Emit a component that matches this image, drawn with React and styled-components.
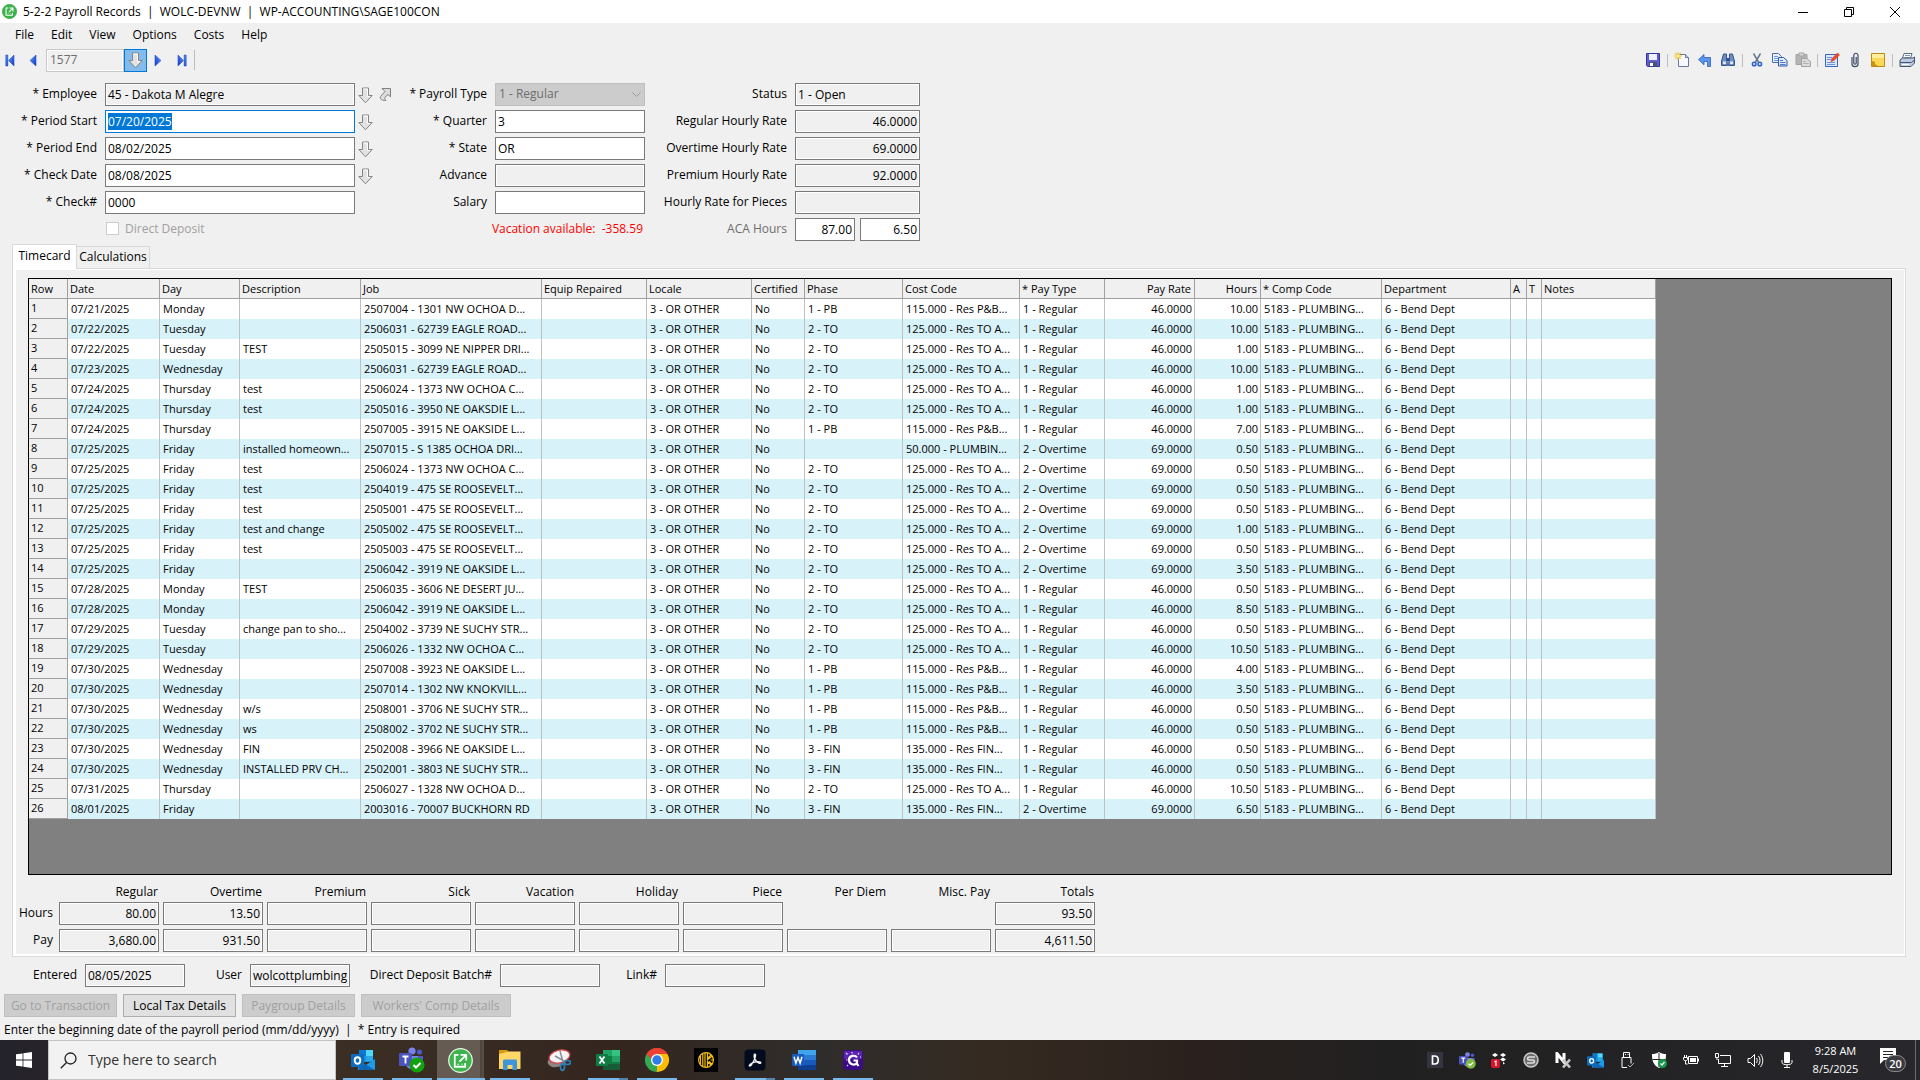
import React, { useEffect, useRef, useState } from "react";
import styled, { createGlobalStyle } from "styled-components";

const GlobalStyle = createGlobalStyle`
  * { box-sizing: border-box; }
  body {
    margin: 0;
    background: #f0f0f0;
    color: #000;
    font-family: "Open Sans", "Noto Sans", sans-serif;
    font-size: 12px;
    line-height: 16px;
  }
  button, input, select { font: inherit; color: inherit; }
  ::selection { background: #0078d7; color: #fff; }
`;

const Screen = styled.div`
  min-height: 100vh;
  display: flex;
  flex-direction: column;
`;

// Title bar
const TitleBar = styled.header`
  display: flex;
  align-items: center;
  height: 23px;
  padding: 0 2px;
  background: #fff;
`;

const Title = styled.h1`
  flex: 1;
  margin: 0 0 0 6px;
  font-size: 12px;
  font-weight: 400;
  white-space: pre;
`;

const WindowButton = styled.button`
  width: 46px;
  height: 21px;
  padding: 0;
  border: none;
  background: none;
  display: flex;
  align-items: center;
  justify-content: center;
`;

// Menu and toolbar
const MenuBar = styled.nav`
  display: flex;
  gap: 17px;
  height: 24px;
  padding: 0 15px;
  align-items: center;
`;

const MenuItem = styled.button`
  padding: 0;
  border: none;
  background: none;
`;

const Toolbar = styled.div`
  display: flex;
  align-items: center;
  height: 26px;
  padding-right: 2px;
`;

const ToolButton = styled.button`
  width: ${(p) => p.$w || 23}px;
  height: 23px;
  padding: 0;
  border: 1px solid ${(p) => (p.$active ? "#0078d7" : "transparent")};
  background: ${(p) => (p.$active ? "#83bbec" : "none")};
  display: flex;
  align-items: center;
  justify-content: center;
`;

const RecordInput = styled.input`
  width: 78px;
  height: 23px;
  margin-left: 1px;
  padding: 0 3px 2px;
  border: 1px solid #c8c8c8;
  background: #f0f0f0;
  box-shadow: inset 0 0 0 1px #fff;
  color: #6d6d6d;
`;

const ToolSeparator = styled.span`
  width: 1px;
  height: ${(p) => (p.$tall ? 20 : 13)}px;
  margin: 0 2px 0 ${(p) => (p.$tall ? 0 : 3)}px;
  background: #bdbdbd;
`;

const Spacer = styled.div`
  flex: 1;
`;

// Header form
const Form = styled.form`
  display: flex;
  align-items: flex-start;
  padding-top: 10px;
`;

const FieldColumn = styled.div`
  display: flex;
  flex-direction: column;
  gap: 4px;
`;

const FieldRow = styled.div`
  display: flex;
  align-items: center;
  height: 23px;
`;

const Label = styled.label`
  width: ${(p) => p.$w}px;
  margin-right: 8px;
  padding-bottom: 1px;
  text-align: right;
  white-space: nowrap;
  color: ${(p) => (p.$dim ? "#6d6d6d" : "#000")};
`;

const TextInput = styled.input`
  width: ${(p) => p.$w || 100}px;
  height: 23px;
  padding: 0 2px 1px;
  border: 1px solid #7a7a7a;
  border-radius: 0;
  background: ${(p) => (p.readOnly ? "#f0f0f0" : "#fff")};
  box-shadow: inset 0 0 0 1px #fff;
  text-align: ${(p) => (p.$right ? "right" : "left")};

  &:focus {
    outline: none;
    border-color: #0078d7;
  }
`;

const IconSlot = styled.div`
  display: flex;
  gap: 6px;
  width: 40px;
  padding: 1px 0 0 3px;
`;

const IconButton = styled.button`
  display: flex;
  padding: 0;
  border: none;
  background: none;
`;

const SelectBox = styled.div`
  display: grid;
  align-items: center;
  width: 150px;
  height: 23px;
`;

const Select = styled.select`
  grid-area: 1 / 1;
  width: 100%;
  height: 23px;
  padding: 0 3px 1px;
  border: 1px solid #bfbfbf;
  border-radius: 0;
  background: #ccc;
  color: #6d6d6d;
  opacity: 1;
  appearance: none;
`;

const SelectArrow = styled.svg`
  grid-area: 1 / 1;
  justify-self: end;
  margin-right: 4px;
  pointer-events: none;
`;

const CheckRow = styled.label`
  display: flex;
  align-items: center;
  gap: 6px;
  height: 21px;
  margin: 0 0 2px 106px;
  color: #a0a0a0;
`;

const CheckBox = styled.input`
  appearance: none;
  width: 13px;
  height: 13px;
  margin: 0;
  border: 1px solid #ccc;
  background: #fff;
`;

const Vacation = styled.div`
  height: 23px;
  padding: 3px 2px 0 0;
  text-align: right;
  white-space: pre;
  color: #f00;
`;

const AcaInputs = styled.div`
  display: flex;
  gap: 5px;
`;

// Tabs and grid
const TabList = styled.div`
  display: flex;
  align-items: flex-end;
  height: 27px;
  margin: 0 12px;
`;

const Tab = styled.button`
  position: relative;
  top: ${(p) => (p.$on ? 1 : 0)}px;
  width: ${(p) => (p.$on ? 65 : 73)}px;
  height: ${(p) => (p.$on ? 25 : 22)}px;
  padding: 0 0 2px;
  border: 1px solid #d9d9d9;
  border-bottom: none;
  border-left-width: ${(p) => (p.$on ? 1 : 0)}px;
  background: ${(p) => (p.$on ? "#fff" : "#f0f0f0")};
`;

const TabPanel = styled.section`
  flex: 1;
  display: flex;
  flex-direction: column;
  margin: 0 14px 0 12px;
  padding: 7px 11px 2px 13px;
  border: 1px solid #d9d9d9;
  box-shadow: inset 3px 0 0 #fff, inset 0 1px 0 #fff, inset 0 -2px 0 #fff, inset -1px 0 0 #fff;
`;

const GridFrame = styled.div`
  flex: 1;
  margin: 2px 2px 0 2px;
  border: 1px solid #000;
  background: #808080;
  overflow: auto;
`;

const Table = styled.table`
  width: 1627px;
  table-layout: fixed;
  border-collapse: separate;
  border-spacing: 0;
  font-size: 11px;
`;

const Col = styled.col`
  width: ${(p) => p.$w}px;
`;

const Th = styled.th`
  height: 20px;
  padding: 0 3px 0 2px;
  border-right: 1px solid #a0a0a0;
  border-bottom: 1px solid #a0a0a0;
  background: #f0f0f0;
  font-weight: 400;
  text-align: ${(p) => (p.$right ? "right" : "left")};
  white-space: nowrap;
  overflow: hidden;
`;

const RowHead = styled(Th)`
  padding-bottom: 1px;
`;

const Tr = styled.tr`
  background: #fff;

  &:nth-child(even) {
    background: #d8f2f9;
  }
`;

const Td = styled.td`
  height: 20px;
  padding: 0 2px 0 3px;
  border-right: 1px solid #c0c0c0;
  text-align: ${(p) => (p.$right ? "right" : "left")};
  white-space: nowrap;
  overflow: hidden;
`;

// Totals and footer
const Totals = styled.div`
  display: grid;
  grid-template-columns: 29px repeat(10, 100px);
  gap: 4px;
  align-items: center;
  padding: 9px 0 2px 0;
`;

const TotalHead = styled.span`
  height: 14px;
  text-align: right;
  line-height: 16px;
  padding-right: 1px;
`;

const TotalLabel = styled.span`
  text-align: right;
  padding: 0 2px 2px 0;
  justify-self: end;
`;

const Footer = styled.div`
  display: flex;
  padding-top: 7px;
`;

const ButtonRow = styled.div`
  display: flex;
  gap: 6px;
  padding: 7px 4px 0;
`;

const ActionButton = styled.button`
  width: ${(p) => p.$w || 113}px;
  height: 23px;
  padding: 0;
  border: 1px solid #adadad;
  background: #e1e1e1;
  white-space: nowrap;

  &:disabled {
    border-color: #bfbfbf;
    background: #ccc;
    color: #a0a0a0;
  }
`;

const StatusLine = styled.div`
  height: 23px;
  padding: 5px 4px 0;
  white-space: pre;
`;

// Taskbar
const Taskbar = styled.footer`
  display: flex;
  height: 40px;
  color: #fff;
  background: linear-gradient(90deg, #24222b 0, #3b2f25 336px, #34261f 620px, #2f2d2b 820px, #352a21 1000px, #2a211e 1200px, #202020 1400px, #27272c 100%);
`;

const StartButton = styled.button`
  width: 48px;
  padding: 0;
  border: none;
  background: none;
  display: flex;
  align-items: center;
  justify-content: center;
`;

const SearchBox = styled.label`
  display: flex;
  align-items: center;
  gap: 11px;
  width: 288px;
  padding-left: 11px;
  border: 1px solid #c4c4c4;
  background: #f2f2f2;
  margin-right: 2px;
`;

const SearchInput = styled.input`
  flex: 1;
  min-width: 0;
  padding: 0;
  border: none;
  background: none;
  font-size: 14px;
  outline: none;

  &::placeholder {
    color: #333;
    opacity: 1;
  }
`;

const TaskButton = styled.button`
  width: 49px;
  height: 40px;
  padding: 0;
  border: none;
  background: ${(p) => (p.$active ? "linear-gradient(90deg, transparent 1px, #655b52 1px, #655b52 44px, #4d443c 44px, #5a5048 48px, transparent 48px)" : "none")};
  display: grid;
  place-items: center;
`;

const TaskIcon = styled.span`
  grid-area: 1 / 1;
  display: flex;
`;

const RunningMark = styled.span`
  grid-area: 1 / 1;
  align-self: end;
  width: ${(p) => (p.$wide ? 48 : 40)}px;
  height: 2px;
  background: ${(p) => (p.$stack ? "linear-gradient(90deg, #76b9ed 31px, #5682a5 31px)" : "#76b9ed")};
`;

const Tray = styled.div`
  display: flex;
  align-items: center;
`;

const TrayButton = styled.button`
  width: ${(p) => p.$w || 32}px;
  height: 40px;
  padding: 0;
  border: none;
  background: none;
  display: flex;
  align-items: center;
  justify-content: center;
`;

const Clock = styled.time`
  width: 65px;
  text-align: center;
  font-size: 11px;
  line-height: 18px;
`;

const ShowDesktop = styled.button`
  width: 5px;
  height: 40px;
  padding: 0;
  border: none;
  border-left: 1px solid #6c6c70;
  background: none;
`;

/* ---- icons ---- */
const Svg = ({ s = 16, w, h, vb, children }) => (
  <svg width={w || s} height={h || s} viewBox={vb || `0 0 ${w || s} ${h || s}`} fill="none" aria-hidden="true">
    {children}
  </svg>
);

const SageIcon = ({ s = 14, ring }) => (
  <Svg s={s} vb="0 0 24 24">
    <circle cx="12" cy="12" r="11.3" fill="#3cb44a" stroke={ring ? "#e8f6e8" : "#2f9e3d"} strokeWidth="1.2" />
    <path d="M6.500 8v10h10v-3.500M6.500 8v-1.500h3.500M11 13l6-6M12 6.500h5.500V12" stroke="#fff" strokeWidth="1.700" />
    <path d="M9.500 15v.500h1M13 15.500h1" stroke="#fff" />
  </Svg>
);

const NavIcon = ({ dir, bar }) => (
  <Svg w={10} h={13}>
    <defs>
      <linearGradient id={`nav${dir}${bar ? "b" : ""}`} x1="0" y1="0" x2="1" y2="1">
        <stop offset="0" stopColor="#6aa0f5" />
        <stop offset="1" stopColor="#0a33c0" />
      </linearGradient>
    </defs>
    <g fill={`url(#nav${dir}${bar ? "b" : ""})`} stroke="#1f55cf" strokeWidth=".6" transform={dir === "left" ? undefined : "matrix(-1 0 0 1 10 0)"}>
      <path d={bar ? "M9 1v11L3.500 6.500z" : "M8 1v11L2 6.500z"} />
      {bar && <path d="M.8 1h2v11h-2z" />}
    </g>
  </Svg>
);

const DownArrow = () => (
  <Svg w={15} h={17}>
    <path d="M4.500 1h6v7.500h3.700L7.500 15.800.8 8.500h3.700z" fill="#e2e2e2" stroke="#858585" />
    <path d="M5.500 2h4v7.500h2.500" stroke="#fff" />
  </Svg>
);

const JumpArrow = () => (
  <Svg w={13} h={15}>
    <path d="M3 1.500h8.500v8.300L9 7.500 6 10.300c-1 1 0 2 1 3.200C3 13.800.5 12 1.500 9.500L6 4.500z" fill="#dcdcdc" stroke="#808080" />
  </Svg>
);

const SaveIcon = () => (
  <Svg s={16}>
    <path d="M1.500 1.500h13v13h-12l-1-1z" fill="#5d5fd0" stroke="#34359c" />
    <path d="M4 2h8v6H4z" fill="#eef2ff" />
    <path d="M4 10h8v4.500H4z" fill="#4a5080" />
    <path d="M5 11h3v3H5z" fill="#fff" />
  </Svg>
);

const NewIcon = () => (
  <Svg s={16}>
    <path d="M4.500 2.500h7l3 3v9h-10z" fill="#f6f9ff" stroke="#66799c" />
    <path d="M11.500 2.500v3h3" fill="#c9d6ea" stroke="#66799c" />
    <path d="M4 0v8M0 4h8M1.200 1.200l5.600 5.600M6.800 1.200L1.200 6.800" stroke="#f0bd2b" strokeWidth="1.100" />
    <circle cx="4" cy="4" r="1.600" fill="#fff3a8" />
  </Svg>
);

const UndoIcon = () => (
  <Svg s={16}>
    <path d="M7 2.500v3h6.500v9h-3v-5H7v3.300L1.500 7.600z" fill="#5b96ec" stroke="#2a5fc4" strokeWidth=".8" />
  </Svg>
);

const FindIcon = () => (
  <Svg s={16}>
    <path d="M3.500 2h3v3l1 8.500h-6V9zM9.500 2h3l2 7v4.500h-6L9.500 5z" fill="#6d8cc6" stroke="#2c4a80" strokeWidth=".9" />
    <path d="M6.500 6h3v3h-3z" fill="#2c4a86" />
    <path d="M3 9.500h3v2.500H3zM10 9.500h3v2.500h-3z" fill="#dce8fb" />
  </Svg>
);

const CutIcon = () => (
  <Svg s={16}>
    <path d="M4.500 1.500L9.500 10M11.500 1.500L6.500 10" stroke="#66758f" strokeWidth="1.500" />
    <circle cx="5.200" cy="12" r="1.800" stroke="#2a5fc4" strokeWidth="1.500" />
    <circle cx="10.800" cy="12" r="1.800" stroke="#2a5fc4" strokeWidth="1.500" />
  </Svg>
);

const CopyIcon = () => (
  <Svg s={16}>
    <path d="M.5 1.500h6l3 3v6h-9z" fill="#e9f1ff" stroke="#4a6dae" />
    <path d="M2 4.500h4M2 6.500h5M2 8.500h4" stroke="#6f97dd" />
    <path d="M6.500 5.500h5l3.500 3v5.500H6.500z" fill="#dce9ff" stroke="#3057a5" />
    <path d="M8 8.500h3M8 10.500h5.500M8 12.500h5.500" stroke="#4c7bd0" />
  </Svg>
);

const PasteIcon = () => (
  <Svg s={16}>
    <path d="M1 2.500h11v10H1z" fill="#b4b4b4" stroke="#a2a2a2" />
    <path d="M4 1h5v3H4z" fill="#d8d8d8" stroke="#a2a2a2" />
    <path d="M6.500 6.500h5l4 3v5h-9z" fill="#dcdcdc" stroke="#a0a0a0" />
    <path d="M8 9.500h3M8 11.500h6" stroke="#b0b0b0" />
  </Svg>
);

const EditIcon = () => (
  <Svg s={16}>
    <path d="M1.500 2.500h12v12h-12z" fill="#dbe8fc" stroke="#3a66b8" />
    <path d="M3 5.500h5M3 7.500h4M3 10.500h8M3 12.500h8" stroke="#6d94dc" />
    <path d="M7 9.500l1-3L13.500 1l2 2L10 8.500z" fill="#ef4a2c" stroke="#c33a20" strokeWidth=".6" />
  </Svg>
);

const ClipIcon = () => (
  <Svg s={16}>
    <path d="M5 5v7c0 3.500 6 3.500 6 0V3.500C11 .5 6.800.5 6.800 3.500V11c0 1.600 2.400 1.600 2.400 0V5" stroke="#3b4b66" strokeWidth="1.200" />
  </Svg>
);

const NoteIcon = () => (
  <Svg s={16}>
    <path d="M1.500 1.500h13v13h-13z" fill="#fbd956" stroke="#b98a1a" />
    <path d="M2 2h12v4H2z" fill="#fdee9c" />
    <path d="M2 9l3 1v2l3 2H2z" fill="#c8930d" />
  </Svg>
);

const PrintIcon = () => (
  <Svg s={16}>
    <path d="M5 1.500h8l-2 6H3z" fill="#fff" stroke="#5a6c8c" />
    <path d="M6 3.500h5M5.500 5.500h5" stroke="#7d93bc" />
    <path d="M1 8l2.500-2H14l1.500-1v6L12 14.500H1z" fill="#bccbe3" stroke="#44546f" />
    <path d="M1 10.500h11.500l3-2.500" stroke="#44546f" />
    <path d="M3 12.500h7" stroke="#fff" />
  </Svg>
);

const OutlookIcon = ({ s = 24 }) => (
  <Svg s={s} vb="0 0 24 24">
    <path d="M8 2h14v12H8z" fill="#1490df" />
    <path d="M8 2h7v6H8z" fill="#0f78d4" />
    <path d="M15 2h7v6h-7z" fill="#50d9ff" />
    <path d="M15 8h7v5h-7z" fill="#28a8ea" />
    <path d="M7 12l8 5 9-6v11H7z" fill="#1d9be8" />
    <path d="M7 12l17 10H8z" fill="#1066b5" />
    <rect x="0" y="6" width="13" height="13" rx="1" fill="#0f6cbd" />
    <ellipse cx="6.500" cy="12.500" rx="2.800" ry="3.200" stroke="#fff" strokeWidth="1.900" />
  </Svg>
);

const TeamsIcon = ({ s = 26, check = "#13a10e" }) => (
  <Svg s={s} vb="0 0 26 26">
    <circle cx="13" cy="4" r="3.600" fill="#7b83eb" />
    <circle cx="20.500" cy="5" r="2.600" fill="#5059c9" />
    <path d="M16 9h8v7c0 3-3 5-6 4z" fill="#5059c9" />
    <path d="M7 9h12v8c0 7-10 7-12 1z" fill="#7b83eb" />
    <rect x="0" y="6" width="13" height="13" rx="1" fill="#4b53bc" />
    <path d="M3.500 9.500h6M6.500 9.500v7" stroke="#fff" strokeWidth="1.800" />
    <circle cx="18" cy="18" r="7.600" fill={check} />
    <path d="M14.500 18l2.500 2.500 4.500-4.500" stroke="#fff" strokeWidth="2" />
  </Svg>
);

const FolderIcon = () => (
  <Svg s={24}>
    <path d="M1 2h8l2 2v4H1z" fill="#d99a12" />
    <path d="M1 6l10-2.500h11.500V21H1z" fill="#ffd766" />
    <path d="M5 22v-9c0-1 .5-1.500 1.500-1.500h11c1 0 1.500.5 1.500 1.500v9h-4.500v-5h-5v5z" fill="#3f95dc" />
  </Svg>
);

const SnipIcon = () => (
  <Svg s={24}>
    <ellipse cx="10" cy="13" rx="9.500" ry="6" transform="rotate(-14 10 13)" fill="#8b8583" />
    <ellipse cx="12.500" cy="8.500" rx="10.500" ry="6.300" transform="rotate(-14 12.500 8.500)" fill="#f7f4f4" stroke="#d4474b" strokeWidth="1.300" />
    <path d="M13 3l3 11M8 8l9 5" stroke="#8a8f95" strokeWidth="1.500" />
    <ellipse cx="20.500" cy="14.500" rx="3" ry="2" stroke="#2a7fb8" strokeWidth="1.700" />
    <ellipse cx="15.500" cy="19" rx="2" ry="3.300" stroke="#2a7fb8" strokeWidth="1.700" />
  </Svg>
);

const ExcelIcon = () => (
  <Svg s={24}>
    <path d="M7 2h9v7H7z" fill="#21a366" />
    <path d="M16 2h8v6h-8z" fill="#33c481" />
    <path d="M7 8h9v8H7z" fill="#107c41" />
    <path d="M16 8h8v6h-8z" fill="#21a366" />
    <path d="M16 14h8v4h-8z" fill="#107c41" />
    <path d="M7 16h17v6H7z" fill="#185c37" />
    <rect x="0" y="6" width="12" height="12" rx="1" fill="#107c41" />
    <path d="M3.500 8.500l5 7M8.500 8.500l-5 7" stroke="#fff" strokeWidth="1.800" />
  </Svg>
);

const WordIcon = () => (
  <Svg s={24}>
    <path d="M6 2h18v5H6z" fill="#41a5ee" />
    <path d="M6 7h18v5H6z" fill="#2b7cd3" />
    <path d="M6 12h18v5H6z" fill="#185abd" />
    <path d="M6 17h18v5H6z" fill="#103f91" />
    <rect x="0" y="6" width="12" height="12" rx="1" fill="#185abd" />
    <path d="M2 8.700l1.900 6.500L6 9.500l2.100 5.700L10 8.700" stroke="#fff" strokeWidth="1.500" />
  </Svg>
);

const ChromeIcon = () => (
  <Svg s={24}>
    <path d="M12 12L1.600 6A12 12 0 0 1 22.400 6z" fill="#ea4335" />
    <path d="M12 12L22.400 6A12 12 0 0 1 12 24z" fill="#fbbc05" />
    <path d="M12 12v12A12 12 0 0 1 1.600 6z" fill="#34a853" />
    <path d="M12 6h10.400L17.200 15 12 24l-.5 0L16.500 14z" fill="#fbbc05" />
    <path d="M1.600 6A12 12 0 0 1 22.400 6H12L7 12z" fill="#ea4335" />
    <circle cx="12" cy="12" r="6" fill="#fff" />
    <circle cx="12" cy="12" r="4.700" fill="#2f7de9" />
  </Svg>
);

const KeeperIcon = () => (
  <Svg s={24}>
    <path d="M0 0h24v24H0z" fill="#000" />
    <circle cx="12" cy="12" r="7.400" stroke="#f2bf12" strokeWidth="1.200" />
    <path d="M6.500 8v8M8.800 6v12M11 5v14M13.500 5v5.500L17 7M13.500 19v-5.500L17 17M13 12l2-1.500L18.500 8M15 13.500l3.500 3M16.500 12h3" stroke="#f2bf12" strokeWidth="1.200" />
  </Svg>
);

const AcrobatIcon = () => (
  <Svg s={24}>
    <rect x="1.500" y="1.500" width="21" height="21" rx="4" fill="#020b1d" />
    <path d="M6.300 17.500c1-2 4-3.300 7-3.700 2-.2 4.700-.1 4.500 1-.3 1.200-3 .2-4.300-1.300-1.500-1.700-2.700-4.500-2.300-6.700.2-1 1.400-.8 1.400.3 0 2.500-2 6.500-4 9.500-.8 1.300-2.600 2-2.300.9z" stroke="#f4f4f4" strokeWidth="1.300" />
  </Svg>
);

const PurpleIcon = () => (
  <Svg s={24}>
    <rect x="2" y="2" width="20" height="20" rx="4" fill="#3a0d86" />
    <path d="M3 3h18v8H3z" fill="#5b23ad" />
    <path d="M16 9.500C14 6.500 8 7.500 8 12s5.500 6 8 3v-2.500h-3.500M15.500 15l2 3" stroke="#fff" strokeWidth="2.200" />
    <path d="M5 5l1.500 1.500M5 12h1.500M6 18l1-1M18 5l-1 1.500M11 4v1.500M19 9h1" stroke="#e6d5ff" strokeWidth="1.200" />
  </Svg>
);

const WindowsLogo = () => (
  <Svg s={16}>
    <path d="M0 2.300L6.600 1.400v6.200H0zM7.400 1.300L16 0v7.600H7.400zM0 8.400h6.600v6.200L0 13.700zM7.400 8.400H16V16l-8.600-1.300z" fill="#fff" />
  </Svg>
);

const SearchIcon = () => (
  <Svg s={17}>
    <circle cx="10.500" cy="6.500" r="5.500" stroke="#222" strokeWidth="1.300" />
    <path d="M6.500 10.500L.8 16.200" stroke="#222" strokeWidth="1.300" />
  </Svg>
);

const TrayD = () => (
  <Svg s={16}>
    <path d="M0 0h16v16H0z" fill="#33343f" />
    <path d="M5.500 4h2c5 0 5 8 0 8h-2z" stroke="#fff" strokeWidth="1.700" />
  </Svg>
);

const TrayDropbox = () => (
  <Svg s={16}>
    <path d="M4 1l3 2-3 2-3-2zM12 1l3 2-3 2-3-2zM12 5.500l3 2-3 2-3-2zM12 10l2 1.200-2 1.300z" fill="#fff" />
    <rect x="0" y="7" width="9" height="9" rx="2" fill="#d8142c" />
    <path d="M3.500 10l1.500-1v5" stroke="#fff" strokeWidth="1.200" />
  </Svg>
);

const TrayS = () => (
  <Svg s={16}>
    <circle cx="8" cy="8" r="7" fill="#6e6e6e" stroke="#c9c9c9" strokeWidth="1.500" />
    <path d="M12 5H6.500C4 5 4 8 6.500 8h3c2.500 0 2.500 3 0 3H4" stroke="#e0e0e0" strokeWidth="1.500" />
  </Svg>
);

const TrayNx = () => (
  <Svg s={16}>
    <path d="M2 11V1.500L9 10V1" stroke="#fff" strokeWidth="3" />
    <path d="M8 7.500l7 8M15 7.500l-7 8" stroke="#c4c4c4" strokeWidth="2.600" />
  </Svg>
);

const TrayUsb = () => (
  <Svg s={16}>
    <path d="M4.500 5V.500h6V5M3 5.500h9v6M3 5.500v10h5M6 2.500h1M8.500 2.500h1" stroke="#fff" />
    <path d="M9 13l2 2 4-4" stroke="#bbb" />
  </Svg>
);

const TrayShield = () => (
  <Svg s={16}>
    <path d="M8 0c2 1.500 4.500 2 7 2 0 6-1 11-7 14C2 13 1 8 1 2c2.500 0 5-.5 7-2z" fill="#fff" />
    <path d="M8 1v14M1.500 7.500h13" stroke="#222" />
    <circle cx="11.500" cy="11.500" r="4.500" fill="#149a49" />
    <path d="M9.500 11.500l1.500 1.500 2.500-3" stroke="#fff" strokeWidth="1.200" />
  </Svg>
);

const TrayBattery = () => (
  <Svg s={16}>
    <path d="M5.500 4.500h9v7h-9zM15.500 6.500v3" stroke="#fff" />
    <path d="M7 6h6v4H7z" fill="#fff" />
    <path d="M.5 5.500h4v2c0 1.500-4 1.500-4 0zM1.500 3v2M3.500 3v2M2.500 9v3h2" stroke="#fff" />
  </Svg>
);

const TrayMonitor = () => (
  <Svg s={16}>
    <path d="M5 3.500h10.500v8H3.500V7M9.500 11.500v3M6 14.500h7M.5 1.500h3v4h-3zM2 5.500V8" stroke="#fff" />
  </Svg>
);

const TraySound = () => (
  <Svg s={17}>
    <path d="M1 6.500h2.500l4-4v12l-4-4H1zM9.500 6c1 1.500 1 3.500 0 5M11.500 4c2 2.500 2 6.500 0 9M13.500 2c3 4 3 9 0 13" stroke="#fff" />
  </Svg>
);

const TrayMic = () => (
  <Svg s={16}>
    <rect x="5" y="0" width="6" height="11" rx="1" fill="#fff" />
    <path d="M3 8v2.500c0 3 10 3 10 0V8M8 13v2.500M5 15.500h6" stroke="#fff" />
  </Svg>
);

const NotifyIcon = () => (
  <svg width="28" height="26" viewBox="0 0 28 26" aria-hidden="true">
    <path d="M2 1h16v12H6l-4 4z" fill="#fff" />
    <path d="M5 4.500h10M5 7.500h10M5 10.500h6" stroke="#27272c" />
    <rect x="7.500" y="8.500" width="20" height="16" rx="8" fill="#3a3a3f" stroke="#8d8d90" />
    <text x="17.500" y="20.500" textAnchor="middle" fontSize="11" fontWeight="600" fill="#fff">20</text>
  </svg>
);

/* ---- data ---- */
const columns = [
  { name: "Row", w: 39 },
  { name: "Date", w: 92 },
  { name: "Day", w: 80 },
  { name: "Description", w: 121 },
  { name: "Job", w: 181 },
  { name: "Equip Repaired", w: 105 },
  { name: "Locale", w: 105 },
  { name: "Certified", w: 53 },
  { name: "Phase", w: 98 },
  { name: "Cost Code", w: 117 },
  { name: "* Pay Type", w: 85 },
  { name: "Pay Rate", w: 90, right: true },
  { name: "Hours", w: 66, right: true },
  { name: "* Comp Code", w: 121 },
  { name: "Department", w: 129 },
  { name: "A", w: 16 },
  { name: "T", w: 15 },
  { name: "Notes", w: 114 },
];

const PB = "1 - PB";
const TO = "2 - TO";
const FN = "3 - FIN";
const codes = {
  [PB]: "115.000 - Res P&B...",
  [TO]: "125.000 - Res TO A...",
  [FN]: "135.000 - Res FIN...",
  "": "50.000 - PLUMBIN...",
};

// date, day, description, job, phase, overtime, hours
const timecard = [
  ["07/21/2025", "Monday", "", "2507004 - 1301 NW OCHOA D...", PB, 0, "10.00"],
  ["07/22/2025", "Tuesday", "", "2506031 - 62739 EAGLE ROAD...", TO, 0, "10.00"],
  ["07/22/2025", "Tuesday", "TEST", "2505015 - 3099 NE NIPPER DRI...", TO, 0, "1.00"],
  ["07/23/2025", "Wednesday", "", "2506031 - 62739 EAGLE ROAD...", TO, 0, "10.00"],
  ["07/24/2025", "Thursday", "test", "2506024 - 1373 NW OCHOA C...", TO, 0, "1.00"],
  ["07/24/2025", "Thursday", "test", "2505016 - 3950 NE OAKSDIE L...", TO, 0, "1.00"],
  ["07/24/2025", "Thursday", "", "2507005 - 3915 NE OAKSIDE L...", PB, 0, "7.00"],
  ["07/25/2025", "Friday", "installed homeown...", "2507015 - S 1385 OCHOA DRI...", "", 1, "0.50"],
  ["07/25/2025", "Friday", "test", "2506024 - 1373 NW OCHOA C...", TO, 1, "0.50"],
  ["07/25/2025", "Friday", "test", "2504019 - 475 SE ROOSEVELT...", TO, 1, "0.50"],
  ["07/25/2025", "Friday", "test", "2505001 - 475 SE ROOSEVELT...", TO, 1, "0.50"],
  ["07/25/2025", "Friday", "test and change", "2505002 - 475 SE ROOSEVELT...", TO, 1, "1.00"],
  ["07/25/2025", "Friday", "test", "2505003 - 475 SE ROOSEVELT...", TO, 1, "0.50"],
  ["07/25/2025", "Friday", "", "2506042 - 3919 NE OAKSIDE L...", TO, 1, "3.50"],
  ["07/28/2025", "Monday", "TEST", "2506035 - 3606 NE DESERT JU...", TO, 0, "0.50"],
  ["07/28/2025", "Monday", "", "2506042 - 3919 NE OAKSIDE L...", TO, 0, "8.50"],
  ["07/29/2025", "Tuesday", "change pan to sho...", "2504002 - 3739 NE SUCHY STR...", TO, 0, "0.50"],
  ["07/29/2025", "Tuesday", "", "2506026 - 1332 NW OCHOA C...", TO, 0, "10.50"],
  ["07/30/2025", "Wednesday", "", "2507008 - 3923 NE OAKSIDE L...", PB, 0, "4.00"],
  ["07/30/2025", "Wednesday", "", "2507014 - 1302 NW KNOKVILL...", PB, 0, "3.50"],
  ["07/30/2025", "Wednesday", "w/s", "2508001 - 3706 NE SUCHY STR...", PB, 0, "0.50"],
  ["07/30/2025", "Wednesday", "ws", "2508002 - 3702 NE SUCHY STR...", PB, 0, "0.50"],
  ["07/30/2025", "Wednesday", "FIN", "2502008 - 3966 NE OAKSIDE L...", FN, 0, "0.50"],
  ["07/30/2025", "Wednesday", "INSTALLED PRV CH...", "2502001 - 3803 NE SUCHY STR...", FN, 0, "0.50"],
  ["07/31/2025", "Thursday", "", "2506027 - 1328 NW OCHOA D...", TO, 0, "10.50"],
  ["08/01/2025", "Friday", "", "2003016 - 70007 BUCKHORN RD", FN, 1, "6.50"],
];

const toCells = ([date, day, desc, job, phase, overtime, hours]) => [
  date, day, desc, job, "", "3 - OR OTHER", "No", phase, codes[phase],
  overtime ? "2 - Overtime" : "1 - Regular",
  overtime ? "69.0000" : "46.0000",
  hours, "5183 - PLUMBING...", "6 - Bend Dept", "", "", "",
];

const totalHeads = ["Regular", "Overtime", "Premium", "Sick", "Vacation", "Holiday", "Piece", "Per Diem", "Misc. Pay", "Totals"];
const totalRows = [
  { name: "Hours", values: ["80.00", "13.50", "", "", "", "", "", null, null, "93.50"] },
  { name: "Pay", values: ["3,680.00", "931.50", "", "", "", "", "", "", "", "4,611.50"] },
];

const tools = [
  ["Save", SaveIcon], null,
  ["New", NewIcon], ["Undo", UndoIcon], ["Find", FindIcon], null,
  ["Cut", CutIcon], ["Copy", CopyIcon], ["Paste", PasteIcon], null,
  ["Edit", EditIcon], ["Attach", ClipIcon], ["Note", NoteIcon], null,
  ["Print", PrintIcon],
];

const tasks = [
  { name: "Outlook", icon: <OutlookIcon />, run: true },
  { name: "Teams", icon: <TeamsIcon />, run: true },
  { name: "Sage 100", icon: <SageIcon s={25} ring />, run: true, active: true },
  { name: "File Explorer", icon: <FolderIcon />, run: true },
  { name: "Snipping Tool", icon: <SnipIcon /> },
  { name: "Excel", icon: <ExcelIcon />, run: true, stack: true },
  { name: "Chrome", icon: <ChromeIcon />, run: true },
  { name: "Keeper", icon: <KeeperIcon /> },
  { name: "Acrobat", icon: <AcrobatIcon />, run: true, stack: true },
  { name: "Word", icon: <WordIcon />, run: true },
  { name: "Greenshot", icon: <PurpleIcon />, run: true },
];

const tray = [
  ["D", <TrayD />],
  ["Teams", <TeamsIcon s={17} check="#7fba42" />],
  ["Dropbox", <TrayDropbox />],
  ["Sync", <TrayS />],
  ["Nx", <TrayNx />],
  ["Outlook", <OutlookIcon s={17} />],
  ["Safely remove hardware", <TrayUsb />],
  ["Windows Security", <TrayShield />],
  ["Battery", <TrayBattery />],
  ["Network", <TrayMonitor />],
  ["Volume", <TraySound />],
  ["Microphone", <TrayMic />],
];

const Field = ({ id, label, lw, w, value, right, locked, dim, inputRef, children }) => (
  <FieldRow>
    <Label htmlFor={id} $w={lw} $dim={dim}>{label}</Label>
    <TextInput id={id} ref={inputRef} $w={w} $right={right} readOnly={locked} defaultValue={value} />
    {children}
  </FieldRow>
);

const Lookup = ({ name }) => (
  <IconButton type="button" aria-label={name}>
    <DownArrow />
  </IconButton>
);

const App = () => {
  const [tab, setTab] = useState("Timecard");
  const startRef = useRef(null);

  useEffect(() => {
    startRef.current.focus();
    startRef.current.select();
  }, []);

  return (
    <Screen>
      <GlobalStyle />
      <TitleBar>
        <SageIcon s={15} />
        <Title>{"5-2-2 Payroll Records  |  WOLC-DEVNW  |  WP-ACCOUNTING\\SAGE100CON"}</Title>
        <WindowButton aria-label="Minimize">
          <Svg s={10}><path d="M0 5.500h10" stroke="#000" /></Svg>
        </WindowButton>
        <WindowButton aria-label="Restore">
          <Svg s={10}><path d="M.5 2.500h7v7h-7zM2.500 2.500v-2h7v7h-2" stroke="#000" /></Svg>
        </WindowButton>
        <WindowButton aria-label="Close">
          <Svg s={10}><path d="M0 0l10 10M10 0L0 10" stroke="#000" /></Svg>
        </WindowButton>
      </TitleBar>

      <MenuBar>
        {["File", "Edit", "View", "Options", "Costs", "Help"].map((m) => (
          <MenuItem key={m}>{m}</MenuItem>
        ))}
      </MenuBar>

      <Toolbar>
        <ToolButton $w={20} aria-label="First record"><NavIcon dir="left" bar /></ToolButton>
        <ToolButton $w={25} aria-label="Previous record"><NavIcon dir="left" /></ToolButton>
        <RecordInput aria-label="Record number" defaultValue="1577" readOnly />
        <ToolButton $active aria-label="Record list"><DownArrow /></ToolButton>
        <ToolButton $w={22} aria-label="Next record"><NavIcon dir="right" /></ToolButton>
        <ToolButton $w={25} aria-label="Last record"><NavIcon dir="right" bar /></ToolButton>
        <ToolSeparator $tall />
        <Spacer />
        {tools.map((tool, i) => {
          if (!tool) return <ToolSeparator key={i} />;
          const [name, Icon] = tool;
          return <ToolButton key={i} aria-label={name}><Icon /></ToolButton>;
        })}
      </Toolbar>

      <Form>
        <FieldColumn>
          <Field id="employee" label="* Employee" lw={97} w={250} value="45 - Dakota M Alegre" locked>
            <IconSlot>
              <Lookup name="Find employee" />
              <IconButton type="button" aria-label="Open employee"><JumpArrow /></IconButton>
            </IconSlot>
          </Field>
          <Field id="start" label="* Period Start" lw={97} w={250} value="07/20/2025" inputRef={startRef}>
            <IconSlot><Lookup name="Pick period start" /></IconSlot>
          </Field>
          <Field id="end" label="* Period End" lw={97} w={250} value="08/02/2025">
            <IconSlot><Lookup name="Pick period end" /></IconSlot>
          </Field>
          <Field id="check-date" label="* Check Date" lw={97} w={250} value="08/08/2025">
            <IconSlot><Lookup name="Pick check date" /></IconSlot>
          </Field>
          <Field id="check" label="* Check#" lw={97} w={250} value="0000" />
          <CheckRow>
            <CheckBox type="checkbox" disabled />
            Direct Deposit
          </CheckRow>
        </FieldColumn>

        <FieldColumn>
          <FieldRow>
            <Label htmlFor="pay-type" $w={92}>* Payroll Type</Label>
            <SelectBox>
              <Select id="pay-type" disabled>
                <option>1 - Regular</option>
              </Select>
              <SelectArrow width="9" height="6" viewBox="0 0 9 6" fill="none">
                <path d="M.5.500l4 4 4-4" stroke="#9a9a9a" />
              </SelectArrow>
            </SelectBox>
          </FieldRow>
          <Field id="quarter" label="* Quarter" lw={92} w={150} value="3" />
          <Field id="state" label="* State" lw={92} w={150} value="OR" />
          <Field id="advance" label="Advance" lw={92} w={150} value="" locked />
          <Field id="salary" label="Salary" lw={92} w={150} value="" />
          <Vacation>{"Vacation available:  -358.59"}</Vacation>
        </FieldColumn>

        <FieldColumn>
          <Field id="status" label="Status" lw={142} w={125} value="1 - Open" locked />
          <Field id="rate-reg" label="Regular Hourly Rate" lw={142} w={125} value="46.0000" right locked />
          <Field id="rate-ot" label="Overtime Hourly Rate" lw={142} w={125} value="69.0000" right locked />
          <Field id="rate-prem" label="Premium Hourly Rate" lw={142} w={125} value="92.0000" right locked />
          <Field id="rate-piece" label="Hourly Rate for Pieces" lw={142} w={125} value="" locked />
          <FieldRow>
            <Label htmlFor="aca" $w={142} $dim>ACA Hours</Label>
            <AcaInputs>
              <TextInput id="aca" $w={60} $right defaultValue="87.00" />
              <TextInput aria-label="ACA Hours, second" $w={60} $right defaultValue="6.50" />
            </AcaInputs>
          </FieldRow>
        </FieldColumn>
      </Form>

      <TabList role="tablist">
        {["Timecard", "Calculations"].map((t) => (
          <Tab key={t} role="tab" aria-selected={t === tab} $on={t === tab} onClick={() => setTab(t)}>
            {t}
          </Tab>
        ))}
      </TabList>

      <TabPanel>
        <GridFrame>
          <Table>
            <colgroup>
              {columns.map((c) => <Col key={c.name} $w={c.w} />)}
            </colgroup>
            <thead>
              <tr>
                {columns.map((c) => <Th key={c.name} $right={c.right}>{c.name}</Th>)}
              </tr>
            </thead>
            <tbody>
              {timecard.map((row, i) => (
                <Tr key={i}>
                  <RowHead scope="row">{i + 1}</RowHead>
                  {toCells(row).map((cell, j) => (
                    <Td key={j} $right={columns[j + 1].right}>{cell}</Td>
                  ))}
                </Tr>
              ))}
            </tbody>
          </Table>
        </GridFrame>

        <Totals>
          <span />
          {totalHeads.map((h) => <TotalHead key={h}>{h}</TotalHead>)}
          {totalRows.map((row) => (
            <React.Fragment key={row.name}>
              <TotalLabel>{row.name}</TotalLabel>
              {row.values.map((v, i) =>
                v === null ? (
                  <span key={i} />
                ) : (
                  <TextInput key={i} $right readOnly aria-label={`${totalHeads[i]} ${row.name}`} defaultValue={v} />
                )
              )}
            </React.Fragment>
          ))}
        </Totals>
      </TabPanel>

      <Footer>
        <Field id="entered" label="Entered" lw={77} value="08/05/2025" locked />
        <Field id="user" label="User" lw={57} value="wolcottplumbing\" locked />
        <Field id="batch" label="Direct Deposit Batch#" lw={142} value="" locked />
        <Field id="link" label="Link#" lw={57} value="" locked />
      </Footer>

      <ButtonRow>
        <ActionButton disabled>Go to Transaction</ActionButton>
        <ActionButton>Local Tax Details</ActionButton>
        <ActionButton disabled>Paygroup Details</ActionButton>
        <ActionButton $w={150} disabled>Workers' Comp Details</ActionButton>
      </ButtonRow>
      <StatusLine>{"Enter the beginning date of the payroll period (mm/dd/yyyy)  |  * Entry is required"}</StatusLine>

      <Taskbar>
        <StartButton aria-label="Start"><WindowsLogo /></StartButton>
        <SearchBox>
          <SearchIcon />
          <SearchInput aria-label="Search" placeholder="Type here to search" />
        </SearchBox>
        {tasks.map((t) => (
          <TaskButton key={t.name} aria-label={t.name} $active={t.active}>
            <TaskIcon>{t.icon}</TaskIcon>
            {t.run && <RunningMark $wide={t.active} $stack={t.stack} />}
          </TaskButton>
        ))}
        <Spacer />
        <Tray>
          {tray.map(([name, icon]) => <TrayButton key={name} aria-label={name}>{icon}</TrayButton>)}
          <Clock>9:28 AM<br />8/5/2025</Clock>
          <TrayButton $w={47} aria-label="Notifications"><NotifyIcon /></TrayButton>
          <ShowDesktop aria-label="Show desktop" />
        </Tray>
      </Taskbar>
    </Screen>
  );
};

export default App;
